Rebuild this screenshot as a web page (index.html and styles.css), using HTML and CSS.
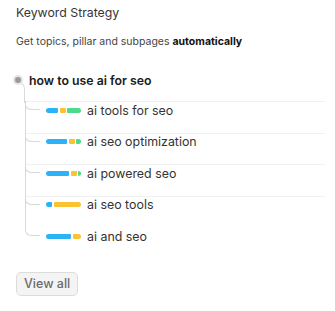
FILE: index.html
```html
<!DOCTYPE html>
<html lang="en">
<head>
  <meta charset="UTF-8">
  <title>Keyword Strategy</title>
  <link rel="stylesheet" href="styles.css">
</head>
<body>

  <h2 class="judul">Keyword Strategy</h2>
  <p class="sub">Get topics, pillar and subpages <strong>automatically</strong></p>

  <div class="tree">
    <div class="root">
      <span class="dot"></span>
      <span class="root-text">how to use ai for seo</span>
    </div>

    <ul class="cabang">
      <li class="baris">
        <span class="bar">
          <span class="seg biru" style="width:12px"></span>
          <span class="seg kuning" style="width:6px"></span>
          <span class="seg hijau" style="width:14px"></span>
        </span>
        <span class="teks">ai tools for seo</span>
      </li>
      <li class="baris">
        <span class="bar">
          <span class="seg biru" style="width:21px"></span>
          <span class="seg kuning" style="width:6px"></span>
          <span class="seg hijau" style="width:5px"></span>
        </span>
        <span class="teks">ai seo optimization</span>
      </li>
      <li class="baris">
        <span class="bar">
          <span class="seg biru" style="width:23px"></span>
          <span class="seg kuning" style="width:6px"></span>
          <span class="seg hijau" style="width:3px"></span>
        </span>
        <span class="teks">ai powered seo</span>
      </li>
      <li class="baris">
        <span class="bar">
          <span class="seg biru" style="width:6px"></span>
          <span class="seg kuning" style="width:27px"></span>
        </span>
        <span class="teks">ai seo tools</span>
      </li>
      <li class="baris">
        <span class="bar">
          <span class="seg biru" style="width:25px"></span>
          <span class="seg kuning" style="width:8px"></span>
        </span>
        <span class="teks">ai and seo</span>
      </li>
    </ul>
  </div>

  <button class="lihat">View all</button>

</body>
</html>
```

FILE: styles.css
```css
body {
  margin: 0;
  padding: 4px 10px 0 16px;
  font-family: Inter, "Noto Sans", sans-serif;
  background-color: white;
  color: #333;
}

.judul {
  margin: 0;
  font-size: 12.3px;
  line-height: 18px;
  font-weight: 400;
  color: #363636;
}

.sub {
  margin: 12px 0 0;
  font-size: 10.5px;
  line-height: 16px;
  color: #444;
}

.sub strong {
  color: #111;
  font-weight: 700;
}

.tree {
  margin-top: 21px;
}

.root {
  position: relative;
  display: flex;
  align-items: center;
  height: 18px;
  margin-top: 1px;
  padding-bottom: 12px;
}

.dot {
  width: 6px;
  height: 6px;
  margin-left: -1px;
  border-radius: 50%;
  background-color: #9a9a9a;
  box-shadow: 0 0 0 2px #e4e4e4;
  position: relative;
  z-index: 1;
}

/* garis lengkung dari titik ke batang */
.root::after {
  content: "";
  position: absolute;
  left: 2px;
  top: 11px;
  width: 6px;
  height: 20px;
  border-top: 1px solid #d9d9d9;
  border-right: 1px solid #d9d9d9;
  border-top-right-radius: 8px;
}

.root-text {
  margin-left: 8px;
  font-size: 12.3px;
  font-weight: 600;
  color: #1a1a1a;
}

.cabang {
  list-style: none;
  margin: 0 0 0 9px;
  padding: 0;
}

.baris {
  position: relative;
  display: flex;
  align-items: center;
  height: 16px;
  padding: 0 0 14.5px 21px;
  border-top: 1px solid #f1f1f1;
}

.baris:last-child {
  border-top-color: transparent;
}

/* batang vertikal */
.baris::before {
  content: "";
  position: absolute;
  left: 0;
  top: -1px;
  bottom: 0;
  width: 1px;
  background-color: #d9d9d9;
}

.baris:last-child::before {
  display: none;
}

/* siku ke setiap baris */
.baris::after {
  content: "";
  position: absolute;
  left: 0;
  top: -1px;
  width: 14px;
  height: 8px;
  border-left: 1px solid #d9d9d9;
  border-bottom: 1px solid #d9d9d9;
  border-bottom-left-radius: 6px;
}

.bar {
  display: flex;
  gap: 1.5px;
  width: 35px;
  border-radius: 3px;
  overflow: hidden;
}

.seg {
  flex-shrink: 0;
  height: 5px;
  border-radius: 1px;
}

.biru {
  background-color: #2cb3f7;
}

.kuning {
  background-color: #fbc232;
}

.hijau {
  background-color: #4fd98c;
}

.teks {
  margin-left: 6px;
  font-size: 12.4px;
  color: #333;
}

.lihat {
  margin-top: 13px;
  height: 24px;
  padding: 0 7px;
  font-family: Inter, "Noto Sans", sans-serif;
  font-size: 12.5px;
  font-weight: 500;
  color: #6b6b6b;
  background-color: #f4f4f5;
  border: 1px solid #dcdcdc;
  border-radius: 5px;
  cursor: pointer;
}
```
